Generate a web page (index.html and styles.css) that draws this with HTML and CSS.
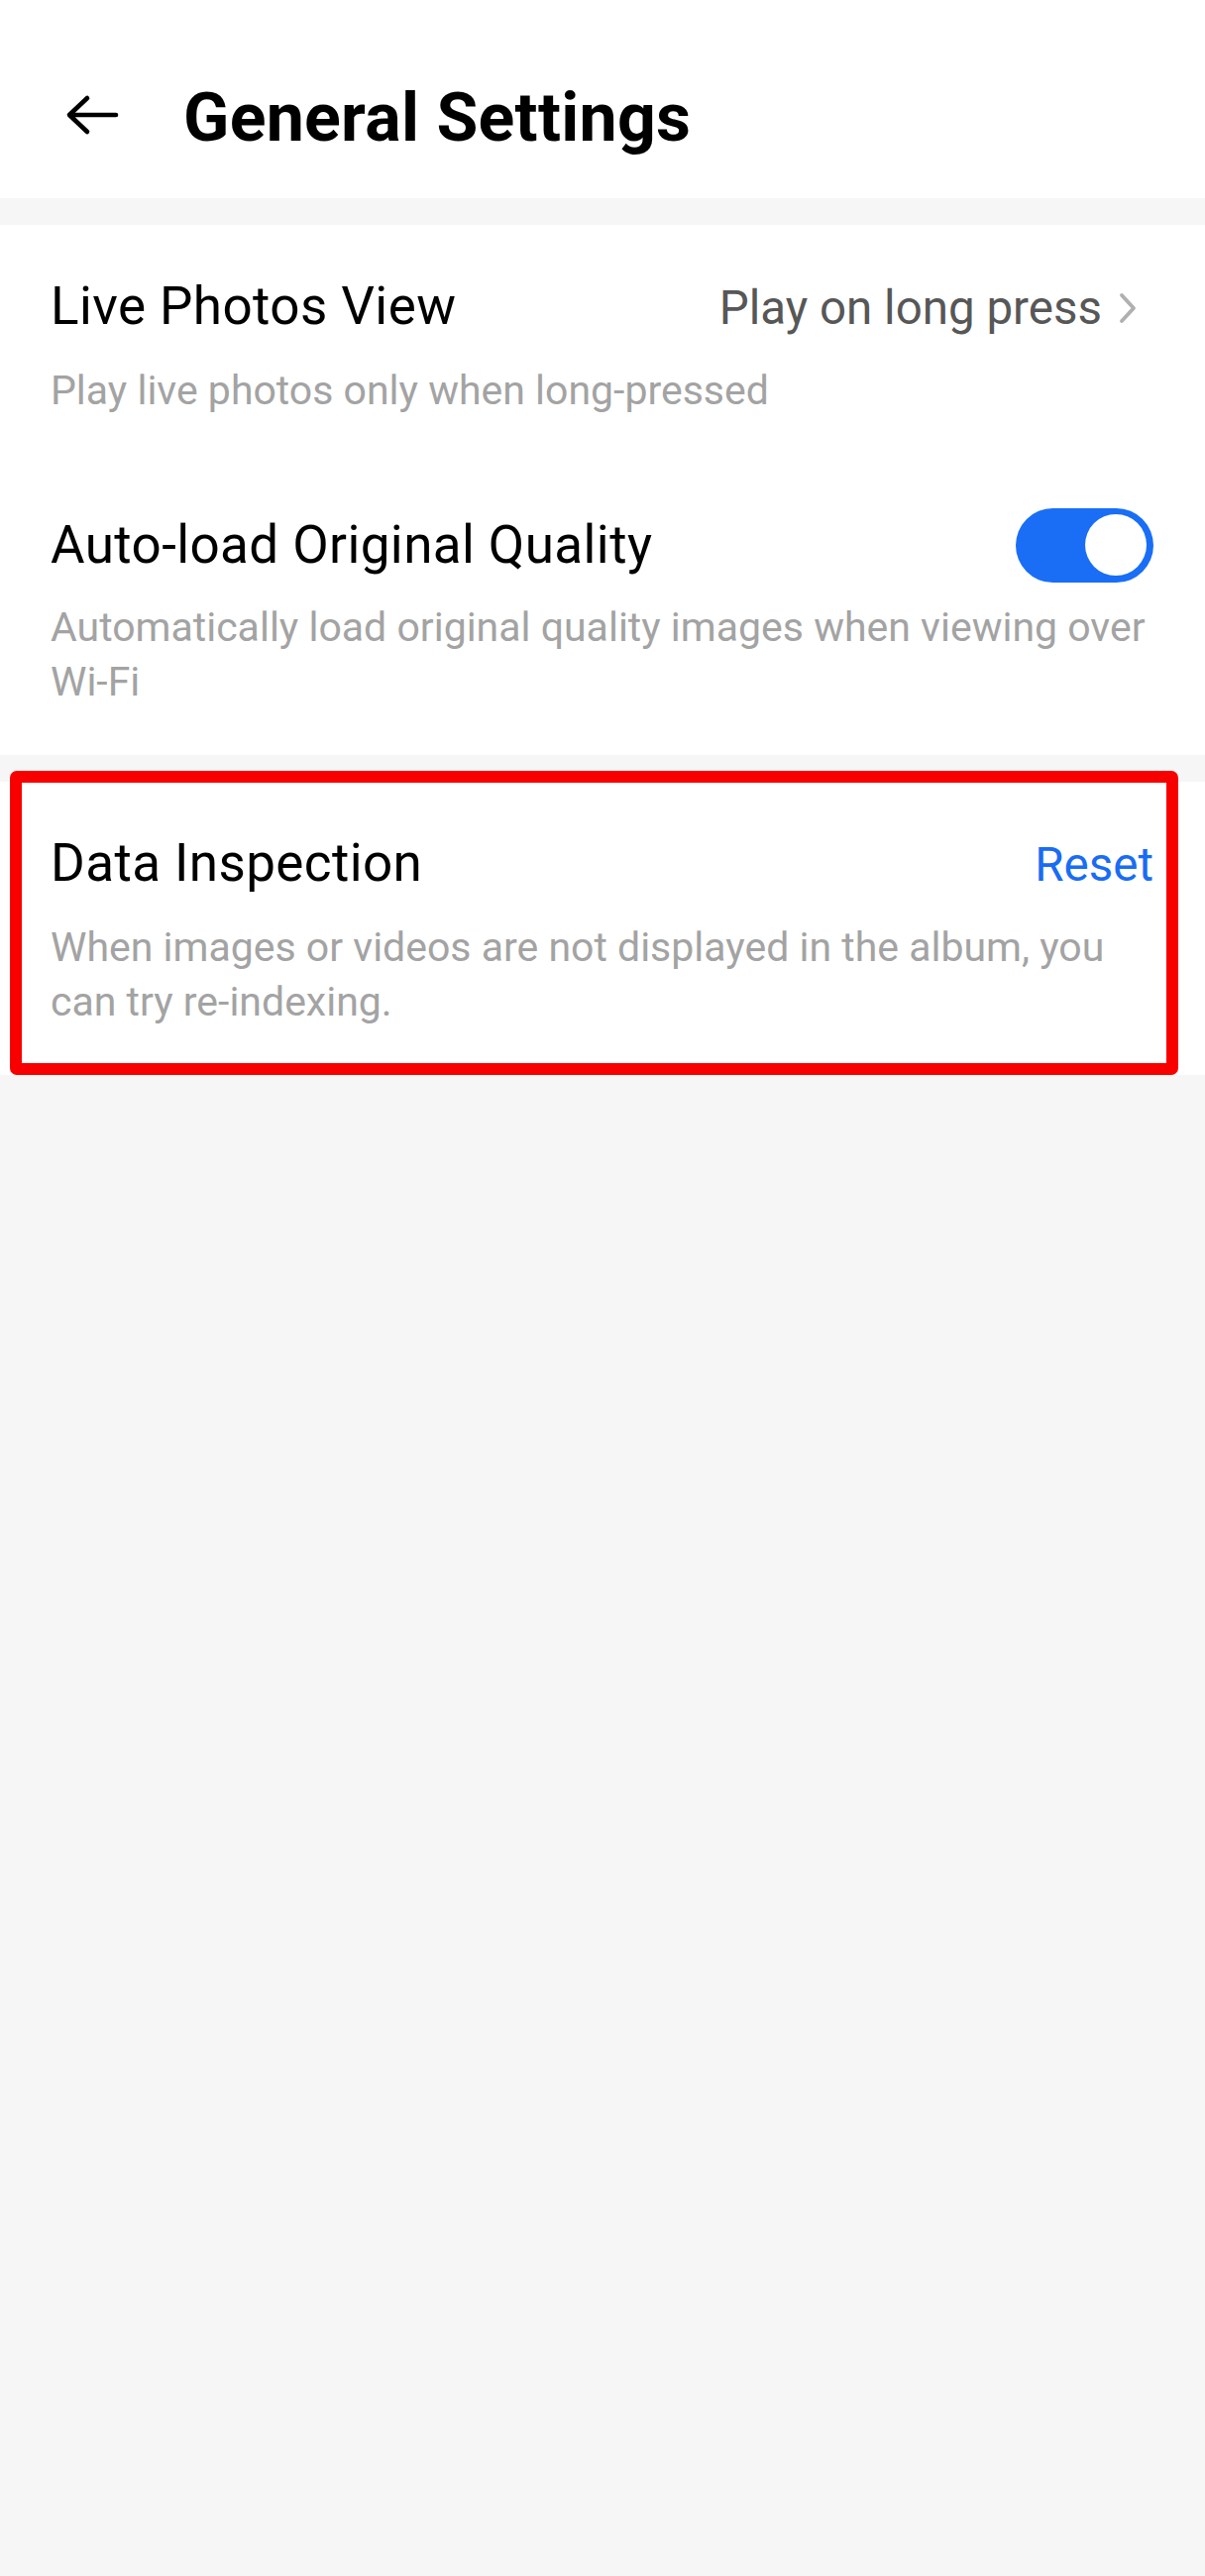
FILE: index.html
```html
<!DOCTYPE html>
<html lang="en">
<head>
<meta charset="utf-8">
<title>General Settings</title>
<link rel="stylesheet" href="styles.css">
</head>
<body>
<header class="topbar">
  <svg class="back" width="56" height="44" viewBox="0 0 56 44" aria-hidden="true">
    <path d="M24 5 L6 22 L24 39 M6 22 H53" fill="none" stroke="#000" stroke-width="4.6" stroke-linecap="round" stroke-linejoin="round"/>
  </svg>
  <h1 class="title">General Settings</h1>
</header>

<section class="group">
  <div class="item">
    <div class="row">
      <span class="item-title">Live Photos View</span>
      <span class="value">Play on long press
        <svg class="chev" width="22" height="32" viewBox="0 0 22 32" aria-hidden="true">
          <path d="M5 3 L17 16 L5 29" fill="none" stroke="#b0b0b0" stroke-width="3.8" stroke-linecap="round" stroke-linejoin="round"/>
        </svg>
      </span>
    </div>
    <p class="desc">Play live photos only when long-pressed</p>
  </div>
  <div class="item">
    <div class="row row-center">
      <span class="item-title">Auto-load Original Quality</span>
      <span class="switch"><span class="knob"></span></span>
    </div>
    <p class="desc">Automatically load original quality images when viewing over Wi-Fi</p>
  </div>
</section>

<section class="group highlighted">
  <div class="item">
    <div class="row">
      <span class="item-title">Data Inspection</span>
      <span class="action">Reset</span>
    </div>
    <p class="desc">When images or videos are not displayed in the album, you can try re-indexing.</p>
  </div>
  <div class="mark"></div>
</section>
</body>
</html>
```

FILE: styles.css
```css
html, body {
  margin: 0;
  padding: 0;
}
body {
  background: #f6f6f6;
  font-family: Roboto, "Noto Sans", sans-serif;
  min-height: 2600px;
}

.topbar {
  background: #fff;
  height: 200px;
  box-sizing: border-box;
  padding: 79px 0 0 64px;
  display: flex;
  align-items: flex-start;
}
.back {
  display: block;
  margin-top: 15px;
  flex: none;
}
.title {
  margin: 0 0 0 65px;
  font-size: 68px;
  line-height: 80px;
  font-weight: 700;
  letter-spacing: 0.3px;
  color: #000;
}

.group {
  background: #fff;
  margin-top: 27px;
  position: relative;
}

.item {
  padding: 50px 52px 46px 51px;
}
.row {
  display: flex;
  justify-content: space-between;
  align-items: baseline;
}
.row-center {
  align-items: center;
}
.item-title {
  font-size: 53px;
  line-height: 64px;
  letter-spacing: 0.4px;
  color: #000;
}
.value {
  display: flex;
  align-items: center;
  font-size: 47.5px;
  line-height: 64px;
  color: #575757;
}
.chev {
  display: block;
  margin-left: 15px;
  margin-right: 15px;
}
.action {
  font-size: 47.5px;
  line-height: 64px;
  color: #1a6cf2;
}
.switch {
  width: 139px;
  height: 75px;
  margin: -6px 0;
  border-radius: 38px;
  background: #196ef5;
  display: flex;
  align-items: center;
  justify-content: flex-end;
  padding-right: 7px;
  box-sizing: border-box;
  flex: none;
}
.knob {
  width: 62px;
  height: 62px;
  border-radius: 50%;
  background: #fff;
}
.desc {
  margin: 24px 0 0;
  font-size: 41px;
  line-height: 55px;
  color: #a3a3a3;
}

.mark {
  position: absolute;
  top: -11px;
  left: 10px;
  right: 27px;
  bottom: 0;
  border: 12px solid #f90000;
  border-radius: 7px;
  pointer-events: none;
}
```
